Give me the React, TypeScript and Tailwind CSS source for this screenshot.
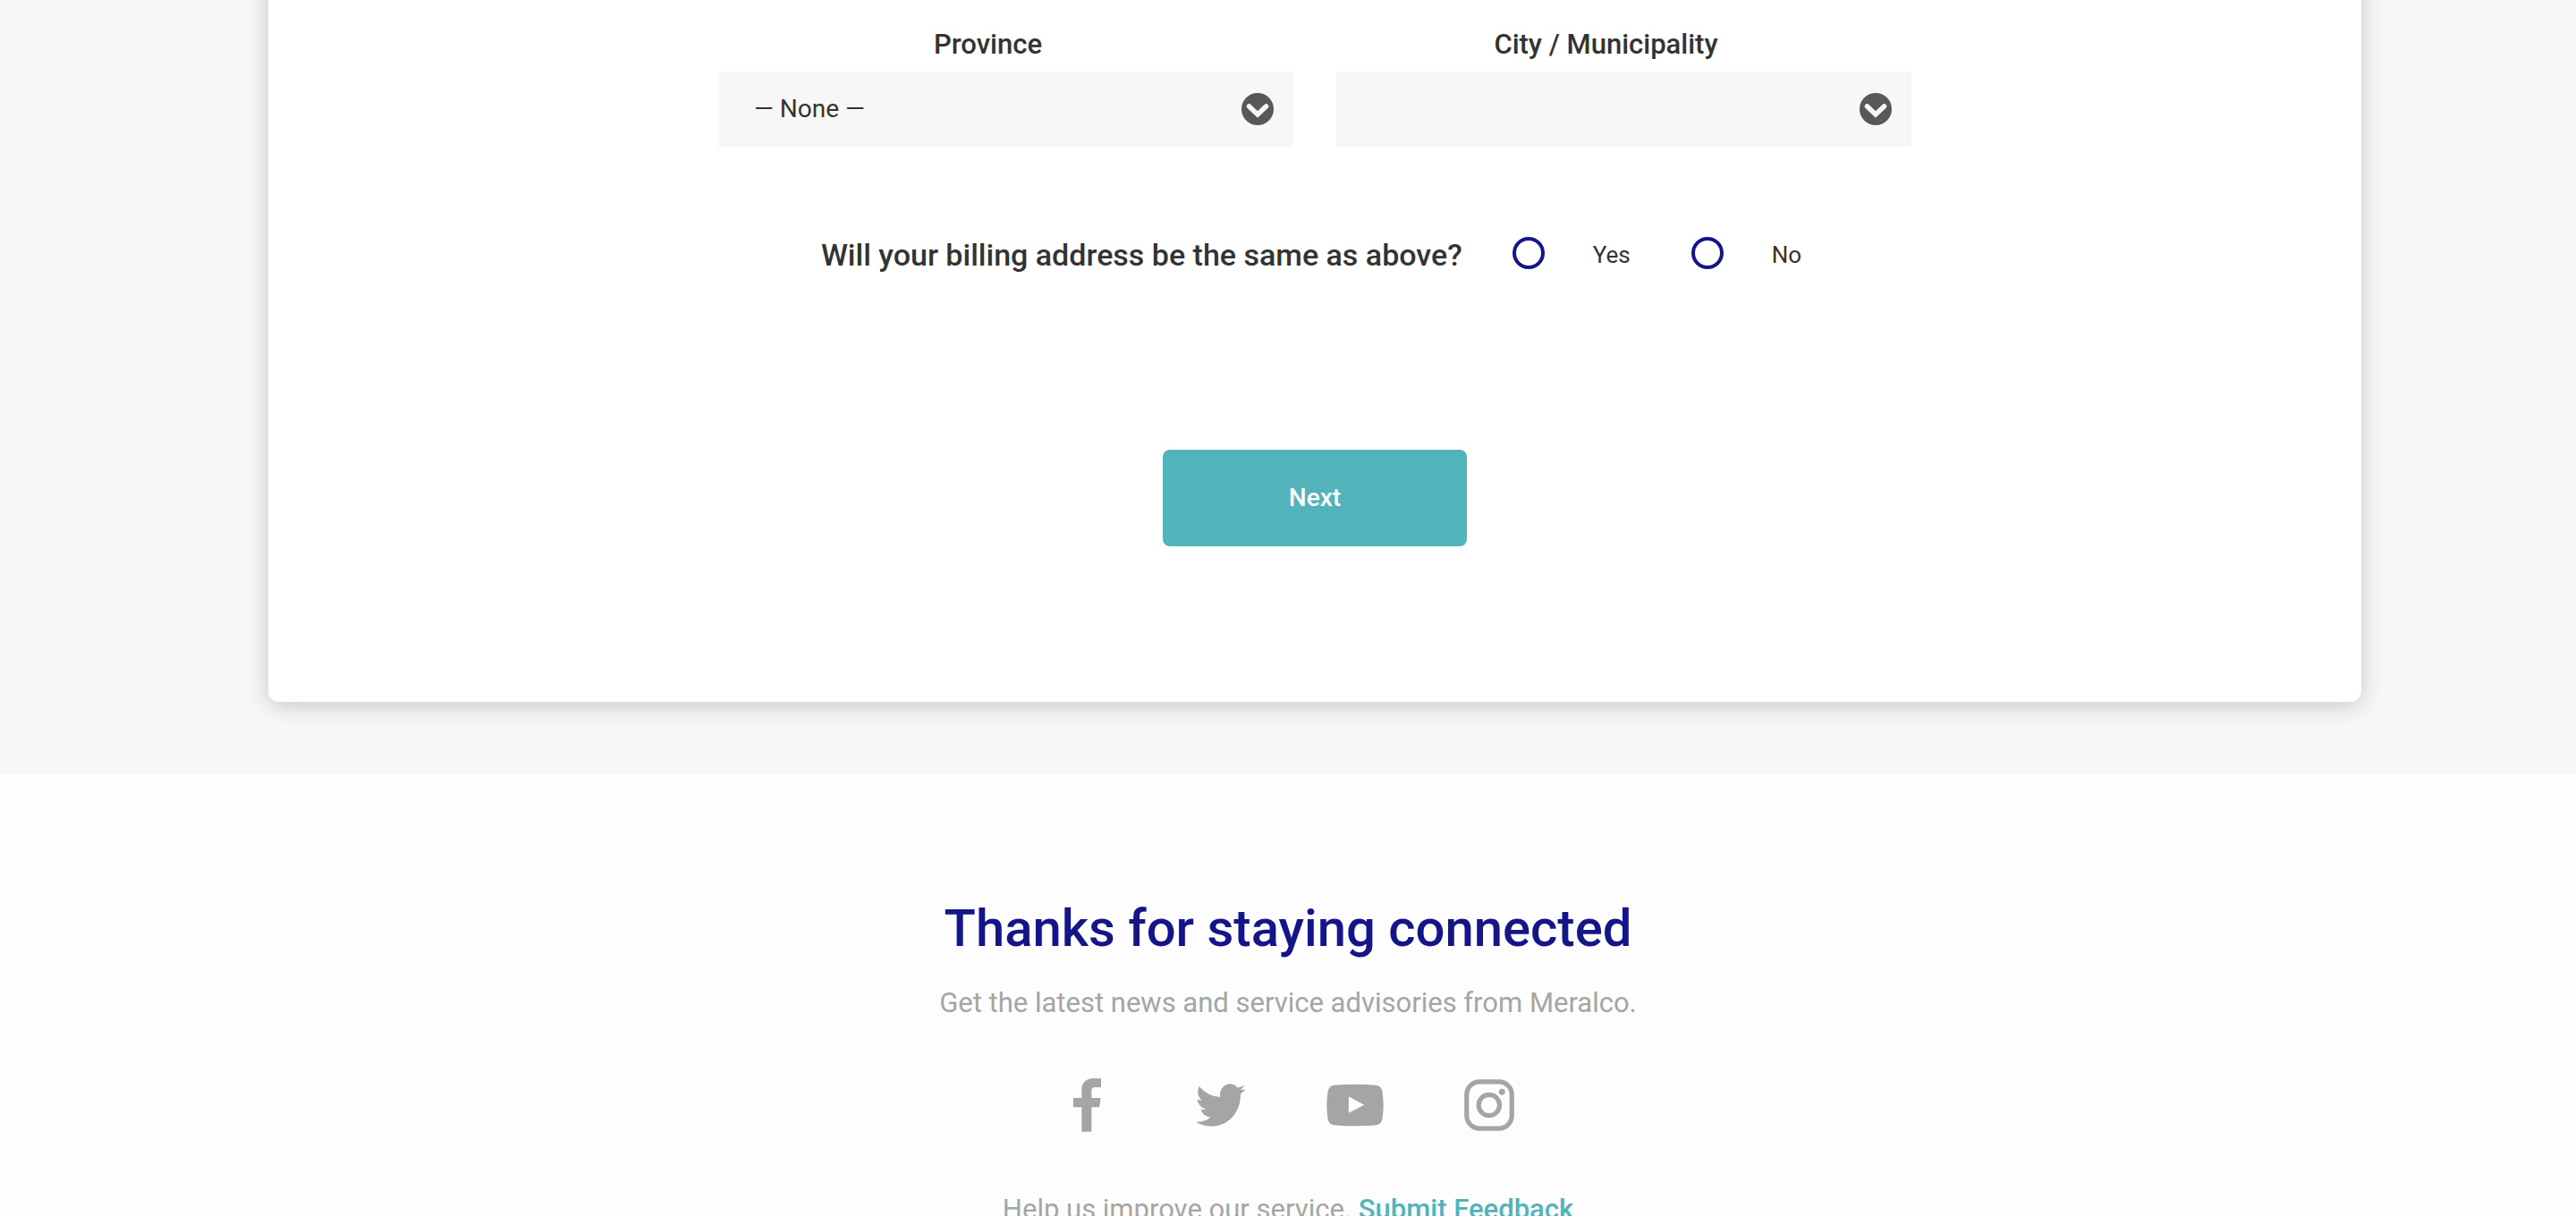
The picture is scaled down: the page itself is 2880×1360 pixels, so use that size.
import type { ReactNode } from "react";

function ChevronBadge() {
  return (
    <svg viewBox="0 0 36 36" aria-hidden="true" className="pointer-events-none absolute top-6 right-[22px] h-9 w-9">
      <circle cx="18" cy="18" r="18" fill="#58585a" />
      <path d="M8.5 15 L18 24 L27.5 15" fill="none" stroke="#f7f7f7" strokeWidth="5.5" strokeLinecap="round" />
    </svg>
  );
}

function SelectField({ id, label, option }: { id: string; label: string; option: string }) {
  return (
    <div className="min-w-0">
      <label htmlFor={id} className="block pr-10 pb-3 text-center text-[31px] leading-9 font-medium">
        {label}
      </label>
      <div className="relative">
        <select
          id={id}
          className="block h-[84px] w-full appearance-none bg-[#f7f7f7] pr-20 pl-10 text-[28px] text-[#333333]"
        >
          <option>{option}</option>
        </select>
        <ChevronBadge />
      </div>
    </div>
  );
}

function RadioOption({ id, label }: { id: string; label: string }) {
  return (
    <div className="flex items-center gap-[54px]">
      <input
        id={id}
        type="radio"
        name="same-billing"
        className="mb-1 h-9 w-9 shrink-0 appearance-none rounded-full border-4 border-[#15158a] bg-white checked:bg-[#15158a]"
      />
      <label htmlFor={id} className="text-[26px] leading-9">
        {label}
      </label>
    </div>
  );
}

function SocialLink({ name, children }: { name: string; children: ReactNode }) {
  return (
    <li className="flex w-[150px] justify-center">
      <a href="#" aria-label={name}>
        {children}
      </a>
    </li>
  );
}

export default function App() {
  return (
    <div className="font-[Roboto,sans-serif] text-[#333333]">
      <main className="flow-root bg-[#f7f7f7] pr-[240px] pb-20 pl-[300px]">
        <form className="-mt-10 rounded-[12px] bg-white px-6 pt-[72px] pb-[174px] shadow-[0_4px_26px_rgba(0,0,0,0.2)]">
          <div className="mx-auto grid max-w-[1334px] grid-cols-2 gap-12">
            <SelectField id="province" label="Province" option="— None —" />
            <SelectField id="city" label="City / Municipality" option="" />
          </div>

          <fieldset className="mt-[101px] pr-2">
            <div className="flex items-center justify-center gap-[68px]">
              <div className="flex items-center gap-14">
                <span className="text-[34px] leading-10 font-medium">
                  Will your billing address be the same as above?
                </span>
                <RadioOption id="billing-yes" label="Yes" />
              </div>
              <RadioOption id="billing-no" label="No" />
            </div>
          </fieldset>

          <div className="mt-[198px] flex justify-center">
            <button
              type="button"
              className="h-[108px] w-[340px] rounded-lg bg-[#52b3bb] text-[28px] font-medium text-white"
            >
              Next
            </button>
          </div>
        </form>
      </main>

      <footer className="bg-[#fdfdfd] pt-[139px] pb-20 text-center text-[31px] leading-9 text-[#a5a5a5]">
        <h2 className="text-[58px] leading-[68px] font-medium text-[#15158a]">Thanks for staying connected</h2>
        <p className="mt-8">Get the latest news and service advisories from Meralco.</p>

        <ul className="mt-[66px] flex h-[60px] items-center justify-center">
          <SocialLink name="Facebook">
            <svg viewBox="30 30 93 180" fill="currentColor" className="h-[60px] w-[31px]">
              <path d="M123 31 V60 H103 Q91 60 91 72 V96 H122 L117 127 H91 V209 H58 V127 H30 V96 H58 V69 C58 45 74 30 96 30 Q110 30 123 31Z" />
            </svg>
          </SocialLink>
          <SocialLink name="Twitter">
            <svg viewBox="457 74 162 140" fill="currentColor" className="h-12 w-14">
              <path d="M457 199 Q487 198 504 184 Q479 180 472 158 Q480 160 489 157 Q463 149 461 124 Q468 129 476 128 Q455 110 467 83 Q497 117 536 118 C531 95 548 75 568 75 Q582 75 592 87 Q604 85 614 79 Q611 88 601 94 Q610 95 618 93 Q612 101 602 107 C604 165 564 213 506 213 Q478 213 457 199Z" />
            </svg>
          </SocialLink>
          <SocialLink name="YouTube">
            <svg viewBox="879 74 188 140" fill="currentColor" className="h-12 w-16">
              <path
                fillRule="evenodd"
                d="M904 79 Q973 72 1042 79 Q1061 81 1063 104 Q1069 144 1063 186 Q1061 206 1044 209 Q973 216 902 209 Q885 206 883 186 Q877 144 883 104 Q885 81 904 79Z M952 115 V170 L1003 143Z"
              />
            </svg>
          </SocialLink>
          <SocialLink name="Instagram">
            <svg viewBox="1327 60 163 168" fill="none" stroke="currentColor" strokeWidth="15" className="h-[58px] w-14">
              <rect x="1335" y="68" width="147" height="152" rx="42" />
              <circle cx="1408" cy="144" r="34" />
              <circle cx="1450" cy="101" r="10" fill="currentColor" stroke="none" />
            </svg>
          </SocialLink>
        </ul>

        <p className="mt-[69px]">
          Help us improve our service.{" "}
          <a href="#" className="font-medium text-[#52b3bb]">
            Submit Feedback
          </a>
        </p>
      </footer>
    </div>
  );
}
